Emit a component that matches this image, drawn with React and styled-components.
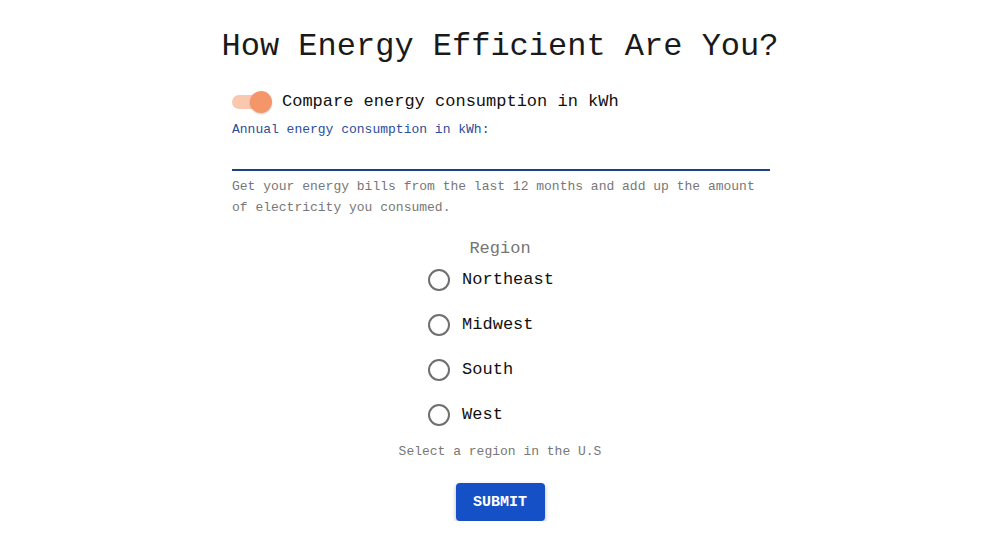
import React, { useState } from 'react';
import styled, { createGlobalStyle } from 'styled-components';

const GlobalStyle = createGlobalStyle`
    body{
        margin:0;
        background:#ffffff;
        font-family:"Liberation Mono","DejaVu Sans Mono",monospace;
        color:#111111;
    }
`;

const regions = ["Northeast", "Midwest", "South", "West"];

const App = () => {
    const [useKwh, setUseKwh] = useState(true);
    const [region, setRegion] = useState("");

    return (
        <Wrap>
            <GlobalStyle/>
            <Title>How Energy Efficient Are You?</Title>

            <Form onSubmit={(e) => e.preventDefault()}>
                <ToggleRow onClick={() => setUseKwh(!useKwh)}>
                    <Track on={useKwh}>
                        <Thumb on={useKwh}/>
                    </Track>
                    <ToggleLabel>Compare energy consumption in kWh</ToggleLabel>
                </ToggleRow>

                <FieldLabel htmlFor="kwh">Annual energy consumption in kWh:</FieldLabel>
                <Input id="kwh" type="text"/>
                <Helper>Get your energy bills from the last 12 months and add up the amount of electricity you consumed.</Helper>

                <RegionBox>
                    <Legend>Region</Legend>
                    <RadioGroup>
                        {regions.map((r) => (
                            <RadioRow key={r} onClick={() => setRegion(r)}>
                                <Circle checked={region === r}/>
                                <RadioText>{r}</RadioText>
                            </RadioRow>
                        ))}
                    </RadioGroup>
                    <SmallHelper>Select a region in the U.S</SmallHelper>
                </RegionBox>

                <SubmitBtn type="submit">SUBMIT</SubmitBtn>
            </Form>
        </Wrap>
    );
};

export default App;

const Wrap = styled.div`
    width:100%;
    display:flex;
    flex-direction:column;
    align-items:center;
    padding-top:27px;
`;

const Title = styled.h1`
    margin:0;
    font-size:32px;
    line-height:40px;
    font-weight:300;
    color:#1a1a1a;
`;

const Form = styled.form`
    width:538px;
    margin-left:2px;
    display:flex;
    flex-direction:column;
    margin-top:21px;
`;

const ToggleRow = styled.div`
    display:flex;
    align-items:center;
    height:28px;
    cursor:pointer;
`;

const Track = styled.div`
    position:relative;
    width:36px;
    height:14px;
    border-radius:7px;
    background:${(p) => (p.on ? "#f9c8ae" : "#bdbdbd")};
`;

const Thumb = styled.div`
    position:absolute;
    top:-4px;
    left:${(p) => (p.on ? "18px" : "-4px")};
    width:22px;
    height:22px;
    border-radius:50%;
    background:${(p) => (p.on ? "#f4956a" : "#fafafa")};
    box-shadow:0 1px 2px rgba(0,0,0,0.2);
`;

const ToggleLabel = styled.span`
    margin-left:14px;
    font-size:17px;
    line-height:24px;
`;

const FieldLabel = styled.label`
    margin-top:6px;
    font-size:13px;
    line-height:16px;
    color:#2a4d9c;
`;

const Input = styled.input`
    height:31px;
    border:none;
    border-bottom:2px solid #1d3f8c;
    outline:none;
    padding:0;
    font-family:inherit;
    font-size:16px;
    background:transparent;
`;

const Helper = styled.p`
    margin:5px 0 0;
    font-size:13px;
    line-height:21px;
    color:#777777;
`;

const RegionBox = styled.div`
    display:flex;
    flex-direction:column;
    align-items:center;
    margin-top:21px;
    margin-left:-2px;
`;

const Legend = styled.div`
    font-size:17px;
    line-height:20px;
    color:#767676;
`;

const RadioGroup = styled.div`
    display:flex;
    flex-direction:column;
    margin-top:-2px;
    padding-right:18px;
`;

const RadioRow = styled.label`
    display:flex;
    align-items:center;
    height:45px;
    cursor:pointer;
`;

const Circle = styled.span`
    width:18px;
    height:18px;
    border:2px solid #6f6f6f;
    border-radius:50%;
    background:${(p) => (p.checked ? "radial-gradient(circle,#6f6f6f 45%,transparent 50%)" : "transparent")};
`;

const RadioText = styled.span`
    margin-left:12px;
    font-size:17px;
    line-height:24px;
    color:#111111;
`;

const SmallHelper = styled.div`
    margin-top:7px;
    font-size:13px;
    line-height:16px;
    color:#777777;
`;

const SubmitBtn = styled.button`
    align-self:center;
    margin-top:23px;
    margin-left:-2px;
    width:89px;
    height:38px;
    border:none;
    border-radius:4px;
    background:#1650c6;
    color:#ffffff;
    font-family:inherit;
    font-weight:700;
    font-size:15px;
    box-shadow:0 2px 4px rgba(0,0,0,0.3);
    cursor:pointer;
`;
